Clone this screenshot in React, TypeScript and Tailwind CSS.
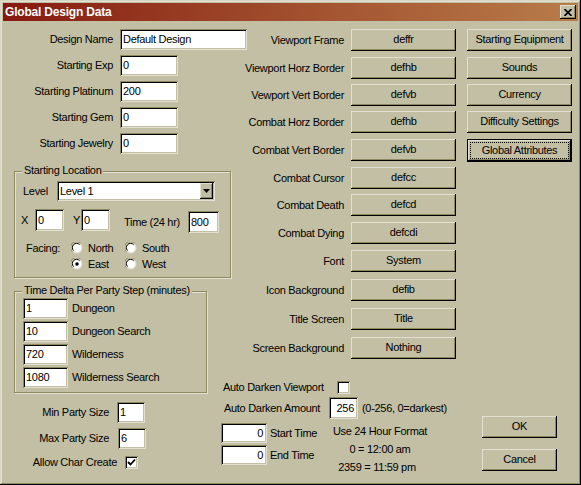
import React from 'react';

const sunken =
  'bg-white shadow-[inset_1px_1px_0_#8d8961,inset_-1px_-1px_0_#e1e0d2,inset_2px_2px_0_#000,inset_-2px_-2px_0_#c2bfa5]';
const raised =
  'bg-[#c2bfa5] shadow-[inset_-1px_-1px_0_#000,inset_1px_1px_0_#e1e0d2,inset_-2px_-2px_0_#8d8961]';

const Field = ({ value, className, right }: { value: string; className: string; right?: boolean }) => (
  <div className={`${sunken} ${className} shrink-0 flex items-center ${right ? 'justify-end pr-[4px]' : 'pl-[3px]'}`}>
    {value}
  </div>
);

const Btn = ({ label, className }: { label: string; className: string }) => (
  <div className={`${raised} ${className} shrink-0 flex items-center justify-center pb-[1px]`}>{label}</div>
);

const Check = ({ checked }: { checked?: boolean }) => (
  <div className={`${sunken} w-[13px] h-[13px] shrink-0 flex items-center justify-center`}>
    {checked && (
      <svg width="9" height="9" viewBox="0 0 9 9">
        <polyline points="1,4 3.5,6.5 8,1.5" fill="none" stroke="#000" strokeWidth="1.8" />
      </svg>
    )}
  </div>
);

const Radio = ({ on }: { on?: boolean }) => (
  <svg width="12" height="12" viewBox="0 0 12 12" className="shrink-0">
    <circle cx="6" cy="6" r="5.5" fill="#e1e0d2" />
    <path d="M1.2 9.5 A5.5 5.5 0 0 1 9.5 1.2" fill="none" stroke="#8d8961" strokeWidth="1" />
    <circle cx="6" cy="6" r="4.2" fill="#fff" />
    <path d="M2.6 8.6 A4.2 4.2 0 0 1 8.6 2.6" fill="none" stroke="#000" strokeWidth="1" />
    {on && <circle cx="6" cy="6" r="1.8" fill="#000" />}
  </svg>
);

const Group = ({ title, className, children }: { title: string; className: string; children: React.ReactNode }) => (
  <div className={`relative border border-[#8d8961] shadow-[inset_1px_1px_0_#e1e0d2,1px_1px_0_#e1e0d2] ${className}`}>
    <span className="absolute left-[7px] top-[-8px] bg-[#c2bfa5] px-[2px] leading-[13px]">{title}</span>
    {children}
  </div>
);

const topFields = [
  { label: 'Starting Exp', value: '0' },
  { label: 'Starting Platinum', value: '200' },
  { label: 'Starting Gem', value: '0' },
  { label: 'Starting Jewelry', value: '0' },
];

const midRows = [
  { label: 'Viewport Frame', value: 'deffr', mt: 'mt-[7px]' },
  { label: 'Viewport Horz Border', value: 'defhb', mt: 'mt-[6px]' },
  { label: 'Vewport Vert Border', value: 'defvb', mt: 'mt-[5px]' },
  { label: 'Combat Horz Border', value: 'defhb', mt: 'mt-[5px]' },
  { label: 'Combat Vert Border', value: 'defvb', mt: 'mt-[6px]' },
  { label: 'Combat Cursor', value: 'defcc', mt: 'mt-[6px]' },
  { label: 'Combat Death', value: 'defcd', mt: 'mt-[5px]' },
  { label: 'Combat Dying', value: 'defcdi', mt: 'mt-[6px]' },
  { label: 'Font', value: 'System', mt: 'mt-[6px]' },
  { label: 'Icon Background', value: 'defib', mt: 'mt-[7px]' },
  { label: 'Title Screen', value: 'Title', mt: 'mt-[7px]' },
  { label: 'Screen Background', value: 'Nothing', mt: 'mt-[7px]' },
];

const sideButtons = [
  { label: 'Starting Equipment', mt: 'mt-[7px]' },
  { label: 'Sounds', mt: 'mt-[6px]' },
  { label: 'Currency', mt: 'mt-[5px]' },
  { label: 'Difficulty Settings', mt: 'mt-[5px]' },
];

const timeDelta = [
  { value: '1', label: 'Dungeon' },
  { value: '10', label: 'Dungeon Search' },
  { value: '720', label: 'Wilderness' },
  { value: '1080', label: 'Wilderness Search' },
];

export default function App() {
  return (
    <div className="w-[581px] h-[485px] bg-[#c2bfa5] p-[3px] text-black text-[11px] tracking-[-0.3px] leading-none font-['Liberation_Sans',Arial,sans-serif] shadow-[inset_-1px_-1px_0_#000,inset_1px_1px_0_#d8d6c4,inset_-2px_-2px_0_#8d8961,inset_2px_2px_0_#e1e0d2] overflow-hidden">
      {/* title bar */}
      <div className="h-[18px] flex items-center justify-between bg-linear-to-r from-[#861710] to-[#b87c4a] pl-[2px] pr-[2px]">
        <span className="text-white font-bold text-[12px] tracking-[-0.2px]">Global Design Data</span>
        <div className={`${raised} w-[16px] h-[14px] flex items-center justify-center`}>
          <svg width="8" height="7" viewBox="0 0 8 7">
            <path d="M0.5 0 L7.5 7 M7.5 0 L0.5 7" stroke="#000" strokeWidth="1.6" />
          </svg>
        </div>
      </div>

      <div className="mt-[1px] h-[460px] flex">
        {/* left column */}
        <div className="w-[218px] shrink-0 flex flex-col">
          <div className="mt-[7px] h-[21px] flex items-center">
            <span className="w-[110px] shrink-0 text-right">Design Name</span>
            <Field value="Default Design" className="ml-[7px] w-[127px] h-[21px]" />
          </div>
          {topFields.map((f) => (
            <div key={f.label} className="mt-[5px] h-[21px] flex items-center">
              <span className="w-[110px] shrink-0 text-right">{f.label}</span>
              <Field value={f.value} className="ml-[7px] w-[58px] h-[21px]" />
            </div>
          ))}

          <Group title="Starting Location" className="mt-[17px] ml-[11px] w-[217px] shrink-0 pb-[5px]">
            <div className="mt-[9px] pl-[8px] flex items-center">
              <span className="w-[34px] shrink-0">Level</span>
              <div className={`${sunken} w-[158px] h-[20px] shrink-0 flex items-center pl-[3px] pr-[2px]`}>
                <span className="flex-1">Level 1</span>
                <div className={`${raised} w-[13px] h-[16px] flex items-center justify-center`}>
                  <svg width="7" height="4" viewBox="0 0 7 4">
                    <path d="M0 0 H7 L3.5 4 Z" fill="#000" />
                  </svg>
                </div>
              </div>
            </div>
            <div className="mt-[8px] pl-[6px] flex items-start">
              <span className="w-[14px] shrink-0 h-[22px] flex items-center">X</span>
              <Field value="0" className="w-[29px] h-[22px]" />
              <span className="ml-[9px] w-[8px] shrink-0 h-[22px] flex items-center">Y</span>
              <Field value="0" className="w-[29px] h-[22px]" />
              <span className="ml-[14px] w-[64px] shrink-0 h-[22px] mt-[2px] flex items-center">Time (24 hr)</span>
              <Field value="800" className="mt-[2px] w-[31px] h-[22px]" />
            </div>
            <div className="mt-[7px] pl-[11px] h-[16px] flex items-center">
              <span className="w-[45px] shrink-0">Facing:</span>
              <div className="w-[54px] shrink-0 flex items-center gap-[5px]">
                <Radio />
                <span>North</span>
              </div>
              <div className="flex items-center gap-[5px]">
                <Radio />
                <span>South</span>
              </div>
            </div>
            <div className="pl-[56px] h-[16px] flex items-center">
              <div className="w-[54px] shrink-0 flex items-center gap-[5px]">
                <Radio on />
                <span>East</span>
              </div>
              <div className="flex items-center gap-[5px]">
                <Radio />
                <span>West</span>
              </div>
            </div>
          </Group>

          <Group title="Time Delta Per Party Step (minutes)" className="mt-[13px] ml-[11px] w-[193px] shrink-0 pt-[6px] pb-[4px] flex flex-col gap-[2px]">
            {timeDelta.map((t) => (
              <div key={t.label} className="pl-[8px] h-[21px] flex items-center">
                <Field value={t.value} className="w-[45px] h-[21px]" />
                <span className="ml-[4px]">{t.label}</span>
              </div>
            ))}
          </Group>

          <div className="mt-[9px] h-[21px] flex items-center">
            <span className="w-[106px] shrink-0 text-right">Min Party Size</span>
            <Field value="1" className="ml-[8px] w-[28px] h-[21px]" />
          </div>
          <div className="mt-[5px] h-[21px] flex items-center">
            <span className="w-[106px] shrink-0 text-right">Max Party Size</span>
            <Field value="6" className="ml-[9px] w-[28px] h-[21px]" />
          </div>
          <div className="mt-[6px] h-[14px] flex items-center">
            <span className="w-[114px] shrink-0 text-right">Allow Char Create</span>
            <div className="ml-[8px]">
              <Check checked />
            </div>
          </div>
        </div>

        {/* middle column */}
        <div className="w-[240px] shrink-0 flex flex-col">
          {midRows.map((r) => (
            <div key={r.label} className={`${r.mt} h-[22px] flex items-center justify-end pr-[5px]`}>
              <span className="text-right">{r.label}</span>
              <Btn label={r.value} className="ml-[7px] w-[105px] h-[22px]" />
            </div>
          ))}

          <div className="mt-[22px] h-[13px] pl-[2px] flex items-center">
            <span className="w-[114px] shrink-0">Auto Darken Viewport</span>
            <Check />
          </div>
          <div className="mt-[3px] h-[22px] pl-[3px] flex items-center">
            <span className="w-[105px] shrink-0">Auto Darken Amount</span>
            <Field value="256" right className="w-[29px] h-[22px]" />
            <span className="ml-[4px]">(0-256, 0=darkest)</span>
          </div>
          <div className="mt-[4px] flex">
            <div className="w-[109px] shrink-0 flex flex-col gap-[2px]">
              <div className="flex items-center">
                <Field value="0" right className="w-[46px] h-[20px]" />
                <span className="ml-[3px]">Start Time</span>
              </div>
              <div className="flex items-center">
                <Field value="0" right className="w-[46px] h-[20px]" />
                <span className="ml-[3px]">End Time</span>
              </div>
            </div>
            <div className="w-[100px] text-center leading-[18px] -mt-[1px]">
              <div>Use 24 Hour Format</div>
              <div>0 = 12:00 am</div>
              <div className="pr-[6px]">2359 = 11:59 pm</div>
            </div>
          </div>
        </div>

        {/* right column */}
        <div className="flex-1 flex flex-col pl-[6px] pb-[11px]">
          {sideButtons.map((b) => (
            <Btn key={b.label} label={b.label} className={`${b.mt} w-[105px] h-[22px]`} />
          ))}
          <div className="mt-[6px] w-[105px] h-[23px] border border-black relative">
            <Btn label="Global Attributes" className="w-full h-full" />
            <div className="absolute inset-[2px] border border-dotted border-black" />
          </div>
          <Btn label="OK" className="mt-auto ml-[15px] w-[75px] h-[22px]" />
          <Btn label="Cancel" className="mt-[11px] ml-[15px] w-[75px] h-[22px]" />
        </div>
      </div>
    </div>
  );
}
